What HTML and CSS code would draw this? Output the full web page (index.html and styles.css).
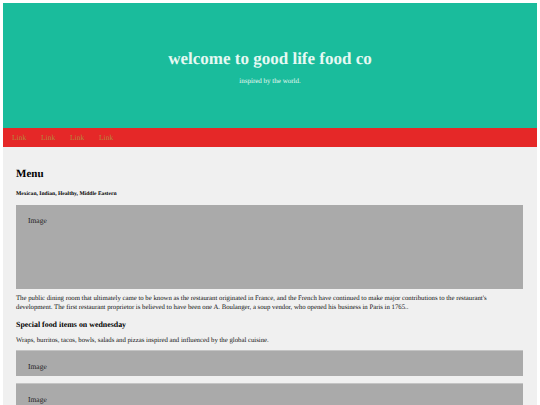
FILE: index.html
```html
<!DOCTYPE html>
<html>
<head>
<meta charset="utf-8">
<link rel="stylesheet" href="styles.css">
</head>
<body>
<div class="page">
  <header class="hero">
    <h1 class="hero-title">welcome to good life food co</h1>
    <p class="hero-sub">inspired by the world.</p>
  </header>
  <nav class="nav">
    <a class="nav-link" href="#">Link</a>
    <a class="nav-link" href="#">Link</a>
    <a class="nav-link" href="#">Link</a>
    <a class="nav-link" href="#">Link</a>
  </nav>
  <main class="main">
    <h2 class="menu-title">Menu</h2>
    <h5 class="menu-tags">Mexican, Indian, Healthy, Middle Eastern</h5>
    <div class="img-box img-large">Image</div>
    <p class="text text-para">The public dining room that ultimately came to be known as the restaurant originated in France, and the French have continued to make major contributions to the restaurant's development. The first restaurant proprietor is believed to have been one A. Boulanger, a soup vendor, who opened his business in Paris in 1765..</p>
    <h3 class="special-title">Special food items on wednesday</h3>
    <p class="text text-wraps">Wraps, burritos, tacos, bowls, salads and pizzas inspired and influenced by the global cuisine.</p>
    <div class="img-box img-small img-first">Image</div>
    <div class="img-box img-small">Image</div>
  </main>
</div>
</body>
</html>
```

FILE: styles.css
```css
html, body {
  margin: 0;
  padding: 0;
  background: #ffffff;
  font-family: "Liberation Serif", "Times New Roman", serif;
  text-rendering: geometricPrecision;
}
.page {
  margin: 3px 3px 0 3px;
  height: 402px;
  overflow: hidden;
  background: #f0f0f0;
}
.hero {
  height: 125px;
  background: #1abc9c;
  color: #e6f9f3;
  display: flex;
  flex-direction: column;
  align-items: center;
  justify-content: center;
  text-align: center;
}
.hero-title {
  margin: 2px 0 0 0;
  font-size: 17px;
  font-weight: bold;
  line-height: 20px;
}
.hero-sub {
  margin: 8px 0 0 0;
  font-size: 7px;
  line-height: 8px;
}
.nav {
  height: 19px;
  background: #e52828;
  display: flex;
  align-items: center;
  padding-left: 9px;
  gap: 17px;
}
.nav-link {
  color: #b5873f;
  text-decoration: none;
  font-size: 7.5px;
  line-height: 8px;
  width: 12px;
}
.main {
  padding: 14px 14px 0 13px;
}
.menu-title {
  margin: 7px 0 0 0;
  font-size: 11px;
  line-height: 13px;
}
.menu-tags {
  margin: 10px 0 0 0;
  font-size: 5.6px;
  line-height: 6px;
}
.img-box {
  background: #aaaaaa;
  font-size: 7.5px;
  line-height: 8px;
  color: #222;
  padding: 12px 12px;
  box-sizing: border-box;
}
.img-large {
  margin-top: 8px;
  height: 84px;
}
.img-small {
  height: 26px;
  padding-top: 12px;
  border-top: 1px solid #c4c4c4;
  margin-top: 7px;
}
.img-first {
  margin-top: 5px;
}
.text {
  margin: 5px 0 0 0;
  font-size: 6.75px;
  line-height: 9px;
  color: #111;
}
.special-title {
  margin: 8px 0 0 0;
  font-size: 7.9px;
  line-height: 10px;
}
.text-wraps {
  margin-top: 6px;
}
```
